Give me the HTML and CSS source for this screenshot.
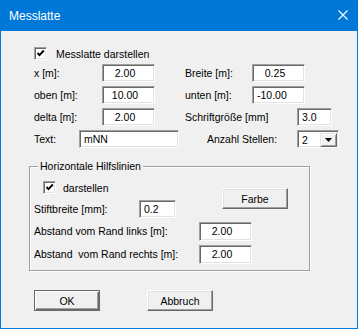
FILE: index.html
```html
<!DOCTYPE html>
<html lang="de">
  <head>
    <meta charset="UTF-8" />
    <meta name="viewport" content="width=device-width, initial-scale=1.0" />
    <title>Messlatte</title>
    <link rel="stylesheet" href="styles.css">
  </head>
  <body>
    <div class="dialog">
      <div class="titlebar">
        <span class="title">Messlatte</span>
        <svg class="close" width="10" height="10" viewBox="0 0 10 10">
          <path d="M0.5 0.5 L9.5 9.5 M9.5 0.5 L0.5 9.5" stroke="#fff" stroke-width="1.1" />
        </svg>
      </div>

      <div class="content">
        <div class="check-row top-check">
          <span class="checkbox">
            <svg width="9" height="9" viewBox="0 0 9 9">
              <path d="M1.5 4 L3.5 6.2 L7.8 1.5" fill="none" stroke="#000" stroke-width="1.9" />
            </svg>
          </span>
          <span class="check-label">Messlatte darstellen</span>
        </div>

        <div class="row">
          <span class="lbl l-left">x [m]:</span>
          <span class="edit w53 t-center">2.00</span>
          <span class="lbl l-right">Breite [m]:</span>
          <span class="edit w53 t-center">0.25</span>
        </div>
        <div class="row">
          <span class="lbl l-left">oben [m]:</span>
          <span class="edit w53 t-center">10.00</span>
          <span class="lbl l-right">unten [m]:</span>
          <span class="edit w53 t-left">-10.00</span>
        </div>
        <div class="row">
          <span class="lbl l-left">delta [m]:</span>
          <span class="edit w53 t-center">2.00</span>
          <span class="lbl l-right l-wide">Schriftgröße [mm]</span>
          <span class="edit w35 t-left">3.0</span>
        </div>
        <div class="row">
          <span class="lbl l-text">Text:</span>
          <span class="edit w100 t-left">mNN</span>
          <span class="lbl l-anzahl">Anzahl Stellen:</span>
          <span class="combo">
            <span class="combo-value">2</span>
            <span class="combo-btn">
              <svg width="7" height="4" viewBox="0 0 7 4"><polygon points="0,0 7,0 3.5,4" fill="#000" /></svg>
            </span>
          </span>
        </div>

        <div class="group">
          <span class="group-title">Horizontale Hilfslinien</span>
          <div class="group-grid">
            <div class="check-row g-check">
              <span class="checkbox">
                <svg width="9" height="9" viewBox="0 0 9 9">
                  <path d="M1.5 4 L3.5 6.2 L7.8 1.5" fill="none" stroke="#000" stroke-width="1.9" />
                </svg>
              </span>
              <span class="check-label">darstellen</span>
            </div>
            <button class="btn btn-farbe">Farbe</button>
            <span class="lbl g-lbl g-r2">Stiftbreite [mm]:</span>
            <span class="edit w37 t-left g-stift">0.2</span>
            <span class="lbl g-lbl g-wide g-r3">Abstand vom Rand links [m]:</span>
            <span class="edit w53 h19 t-center g-abst g-r3">2.00</span>
            <span class="lbl g-lbl g-wide g-r4">Abstand  vom Rand rechts [m]:</span>
            <span class="edit w53 h19 t-center g-abst g-r4">2.00</span>
          </div>
        </div>

        <div class="buttons">
          <button class="btn btn-default">OK</button>
          <button class="btn">Abbruch</button>
        </div>
      </div>
    </div>
  </body>
</html>
```

FILE: styles.css
```css
* {
  margin: 0;
  padding: 0;
  box-sizing: border-box;
}
body {
  background: #f0f0f0;
  font-family: "Liberation Sans", Arial, sans-serif;
  font-size: 10.5px;
  color: #000;
}
.dialog {
  width: 358px;
  height: 329px;
  border: 1px solid #0078d7;
  background: #f0f0f0;
}
.titlebar {
  height: 30px;
  background: #0078d7;
  display: flex;
  justify-content: space-between;
  align-items: flex-start;
  padding: 0 9px 0 8px;
}
.title {
  color: #fff;
  font-size: 12px;
  line-height: 30px;
}
.close {
  margin-top: 9px;
}

/* checkbox */
.check-row {
  display: flex;
  align-items: center;
  height: 13px;
}
.top-check {
  margin: 16px 0 0 33px;
}
.top-check .check-label {
  margin-left: 9px;
}
.checkbox {
  width: 13px;
  height: 13px;
  background: #fff;
  border: 1px solid;
  border-color: #a0a0a0 #fff #fff #a0a0a0;
  box-shadow: inset 1px 1px 0 #696969, inset -1px -1px 0 #e3e3e3;
  display: flex;
  align-items: center;
  justify-content: center;
}

/* rows */
.row {
  display: flex;
  align-items: center;
  height: 18px;
  margin-top: 4px;
  padding-left: 33px;
}
.row:nth-of-type(2) {
  margin-top: 4px;
}
.lbl {
  white-space: pre;
  line-height: 13px;
}
.l-left {
  width: 68px;
}
.l-right {
  width: 67px;
  margin-left: 30px;
}
.l-wide {
  width: 112px;
}
.l-text {
  width: 45px;
}
.l-anzahl {
  width: 90px;
  margin-left: 28px;
}

.edit {
  display: block;
  height: 18px;
  background: #fff;
  border: 1px solid;
  border-color: #a0a0a0 #fff #fff #a0a0a0;
  box-shadow: inset 1px 1px 0 #696969, inset -1px -1px 0 #e3e3e3;
  line-height: 16px;
  white-space: nowrap;
}
.w35 { width: 35px; }
.w37 { width: 37px; }
.w53 { width: 53px; }
.w100 { width: 100px; }
.h19 {
  height: 19px;
  line-height: 17px;
}
.t-center {
  text-align: center;
  padding-right: 7px;
}
.t-left {
  padding-left: 4px;
}

.combo {
  display: flex;
  width: 42px;
  height: 18px;
  background: #fff;
  border: 1px solid;
  border-color: #a0a0a0 #fff #fff #a0a0a0;
  box-shadow: inset 1px 1px 0 #696969, inset -1px -1px 0 #e3e3e3;
  padding: 2px 1px 1px 2px;
}
.combo-value {
  flex: 1;
  line-height: 14px;
  padding-left: 2px;
}
.combo-btn {
  width: 17px;
  height: 14px;
  background: #f0f0f0;
  border: 1px solid;
  border-color: #e3e3e3 #696969 #696969 #e3e3e3;
  box-shadow: inset 1px 1px 0 #fff, inset -1px -1px 0 #a0a0a0;
  display: flex;
  align-items: center;
  justify-content: center;
}

/* group box */
.group {
  margin: 18px 0 0 28px;
  width: 281px;
  height: 105px;
  border: 1px solid #a0a0a0;
  box-shadow: inset 1px 1px 0 #fff, 1px 1px 0 #fff;
}
.group-title {
  display: block;
  width: fit-content;
  height: 13px;
  line-height: 13px;
  margin: -7px 0 0 8px;
  padding: 0 2px;
  background: #f0f0f0;
}
.group-grid {
  display: grid;
  grid-template-columns: 105px 60px 23px 30px 18px;
  grid-template-rows: 13px 24px 23px 23px;
  margin-top: 8px;
  padding-left: 4px;
}
.g-check {
  grid-column: 1 / 3;
  grid-row: 1;
  margin-left: 9px;
}
.g-check .check-label {
  margin-left: 7px;
}
.btn-farbe {
  grid-column: 4 / 6;
  grid-row: 1 / 3;
  align-self: start;
  margin-top: 7px;
  width: 48px;
  height: 20px;
}
.g-lbl {
  grid-column: 1;
  align-self: end;
  height: 18px;
  line-height: 18px;
}
.g-r2 { grid-row: 2; }
.g-stift {
  grid-column: 2;
  grid-row: 2;
  align-self: end;
}
.g-wide {
  grid-column: 1 / 3;
  height: 19px;
  line-height: 19px;
}
.g-r3 { grid-row: 3; }
.g-r4 { grid-row: 4; }
.g-abst {
  grid-column: 3 / 5;
  align-self: end;
}

/* buttons */
.btn {
  display: block;
  width: 66px;
  height: 21px;
  background: #f0f0f0;
  border: 1px solid;
  border-color: #fff #696969 #696969 #fff;
  box-shadow: inset -1px -1px 0 #a0a0a0, inset 1px 1px 0 #e3e3e3;
  font: inherit;
  color: #000;
  padding: 0;
}
.btn-default {
  border-color: #696969;
  box-shadow: inset 1px 1px 0 #fff, inset -1px -1px 0 #696969, inset -2px -2px 0 #a0a0a0;
}
.buttons {
  display: flex;
  gap: 47px;
  margin: 19px 0 0 33px;
}
```
